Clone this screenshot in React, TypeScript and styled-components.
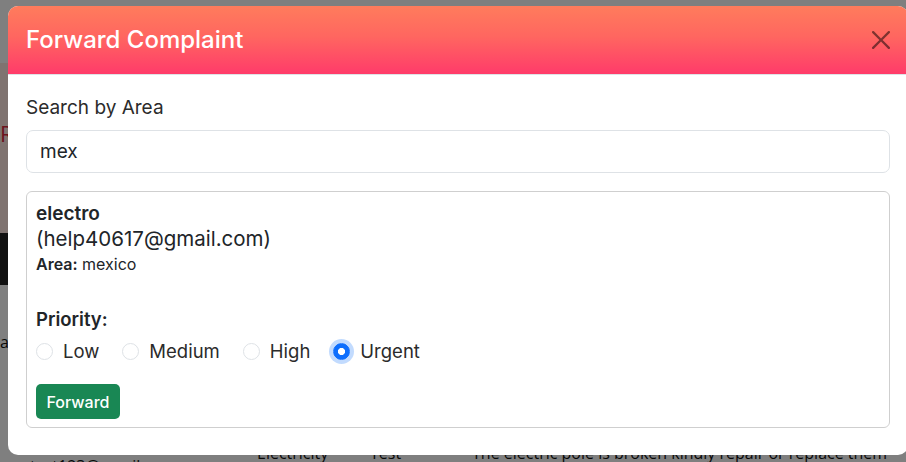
import React from "react";
import styled, { createGlobalStyle } from "styled-components";

const GlobalStyle = createGlobalStyle`
  html, body { margin: 0; padding: 0; overflow: hidden; background: #fff; }
  body { font-family: Inter, "Noto Sans", sans-serif; }
  *, *::before, *::after { box-sizing: border-box; }
`;

/* ---------- page behind the dialog ---------- */

const Page = styled.div`
  display: flex;
  flex-direction: column;
  width: 906px;
  height: 462px;
  overflow: hidden;
  font-family: "Open Sans", "Noto Sans", sans-serif;
  & > * { flex-shrink: 0; }
`;

const NavBar = styled.header`
  height: 63px;
  background: #fff;
`;

const Hero = styled.section`
  height: 170px;
  padding-top: 58px;
  background: #fee6e0;
`;

const HeroTitle = styled.h2`
  margin: 0;
  font-size: 22px;
  line-height: 24px;
  font-weight: 400;
  color: #d8283c;
`;

const Table = styled.div`
  display: flex;
  flex-direction: column;
  & > * { flex-shrink: 0; }
`;

const TableRow = styled.div<{ $head?: boolean; $height?: number; $padTop?: number }>`
  display: grid;
  grid-template-columns: 23px 227px 113px 102px 1fr;
  align-items: start;
  height: ${(p) => (p.$height ? `${p.$height}px` : "auto")};
  padding-top: ${(p) => p.$padTop ?? 0}px;
  background: ${(p) => (p.$head ? "#222" : "#fff")};
  color: ${(p) => (p.$head ? "#fff" : "#111")};
`;

const Cell = styled.div<{ $offset?: number; $flush?: boolean }>`
  margin-top: ${(p) => p.$offset ?? 0}px;
  padding: 0 ${(p) => (p.$flush ? 0 : 7)}px;
  font-size: 16px;
  line-height: 22px;
  white-space: nowrap;
`;

/* ---------- modal ---------- */

const Backdrop = styled.div`
  position: fixed;
  inset: 0;
  display: flex;
  align-items: flex-start;
  padding: 6px 0 0 8px;
  background: rgba(0, 0, 0, 0.5);
  overflow: hidden;
`;

const Dialog = styled.div`
  flex: 0 0 900px;
  width: 900px;
  background: #fff;
  border-radius: 10px;
  overflow: hidden;
`;

const Header = styled.div`
  height: 69px;
  padding: 0 18px;
  display: flex;
  align-items: center;
  justify-content: space-between;
  background: linear-gradient(180deg, #ff7c5c 0%, #ff6660 45%, #ff3b6a 100%);
  border-bottom: 1px solid #dee2e6;
`;

const Title = styled.h5`
  margin: 0;
  font-size: 24px;
  line-height: 1.2;
  font-weight: 500;
  color: #fff;
`;

const CloseButton = styled.button`
  display: flex;
  width: 18px;
  height: 18px;
  padding: 0;
  border: 0;
  background: none;
  color: #000;
  opacity: 0.5;
  cursor: pointer;
  svg { width: 18px; height: 18px; }
`;

const Body = styled.div`
  padding: 19px 18px 27px;
  color: #212529;
`;

const FieldLabel = styled.label`
  display: block;
  font-size: 19px;
  line-height: 28px;
  margin-bottom: 8px;
  color: #2b2b2b;
`;

const SearchInput = styled.input`
  display: block;
  width: 100%;
  height: 43px;
  padding: 0 13px;
  font-family: inherit;
  font-size: 19px;
  color: #212529;
  border: 1px solid #dee2e6;
  border-radius: 7px;
  outline: none;
  background: #fff;
`;

const ResultCard = styled.div`
  margin-top: 18px;
  border: 1px solid #cfcfcf;
  border-radius: 6px;
  padding: 11px 9px 8px;
`;

const Name = styled.div`
  font-size: 19px;
  line-height: 22px;
  font-weight: 600;
`;

const Email = styled.div`
  margin-top: 3px;
  font-size: 20.5px;
  line-height: 22px;
`;

const AreaLine = styled.div`
  margin-top: 3px;
  font-size: 16px;
  line-height: 22px;
  strong { font-weight: 600; }
`;

const PriorityLabel = styled.div`
  margin-top: 33px;
  font-size: 18.5px;
  line-height: 22px;
  font-weight: 600;
`;

const RadioRow = styled.div`
  display: flex;
  align-items: center;
  gap: 23px;
  height: 22px;
  margin-top: 10px;
`;

const RadioOption = styled.label`
  display: inline-flex;
  align-items: center;
  gap: 10px;
  font-size: 18.5px;
  line-height: 22px;
  color: #2b2b2b;
`;

const RadioInput = styled.input`
  appearance: none;
  margin: 0;
  width: 17px;
  height: 17px;
  flex: 0 0 17px;
  border: 1px solid #dee2e6;
  border-radius: 50%;
  background: #fff;

  &:checked {
    border-color: #0d6efd;
    background: radial-gradient(circle at center, #fff 0 3.2px, #0d6efd 3.9px);
    box-shadow: 0 0 0 4px rgba(13, 110, 253, 0.25);
  }
`;

const ForwardButton = styled.button`
  display: block;
  margin-top: 22px;
  height: 35px;
  padding: 0 10.5px;
  border: 0;
  border-radius: 5px;
  background: #198754;
  color: #fff;
  font-family: inherit;
  font-size: 16px;
  font-weight: 500;
  cursor: pointer;
`;

const CloseIcon = () => (
  <svg viewBox="0 0 16 16" fill="currentColor" aria-hidden="true">
    <path d="M.293.293a1 1 0 0 1 1.414 0L8 6.586 14.293.293a1 1 0 1 1 1.414 1.414L9.414 8l6.293 6.293a1 1 0 0 1-1.414 1.414L8 9.414l-6.293 6.293a1 1 0 0 1-1.414-1.414L6.586 8 .293 1.707a1 1 0 0 1 0-1.414z" />
  </svg>
);

const priorities = ["Low", "Medium", "High", "Urgent"];

export default function App() {
  return (
    <>
      <GlobalStyle />
      <Page>
        <NavBar />
        <Hero>
          <HeroTitle>Re</HeroTitle>
        </Hero>
        <Table>
          <TableRow $head $height={52} />
          <TableRow $height={145} $padTop={46}>
            <Cell $flush>a</Cell>
          </TableRow>
          <TableRow $height={60}>
            <Cell />
            <Cell $offset={25}>test123@gmail.com</Cell>
            <Cell $offset={12}>Electricity</Cell>
            <Cell $offset={12}>Test</Cell>
            <Cell $offset={12}>The electric pole is broken kindly repair or replace them</Cell>
          </TableRow>
        </Table>
      </Page>

      <Backdrop>
        <Dialog role="dialog" aria-modal="true">
          <Header>
            <Title>Forward Complaint</Title>
            <CloseButton aria-label="Close">
              <CloseIcon />
            </CloseButton>
          </Header>
          <Body>
            <FieldLabel htmlFor="area">Search by Area</FieldLabel>
            <SearchInput id="area" defaultValue="mex" />
            <ResultCard>
              <Name>electro</Name>
              <Email>(help40617@gmail.com)</Email>
              <AreaLine>
                <strong>Area:</strong> mexico
              </AreaLine>
              <PriorityLabel>Priority:</PriorityLabel>
              <RadioRow>
                {priorities.map((p) => (
                  <RadioOption key={p}>
                    <RadioInput type="radio" name="priority" defaultChecked={p === "Urgent"} />
                    {p}
                  </RadioOption>
                ))}
              </RadioRow>
              <ForwardButton>Forward</ForwardButton>
            </ResultCard>
          </Body>
        </Dialog>
      </Backdrop>
    </>
  );
}
